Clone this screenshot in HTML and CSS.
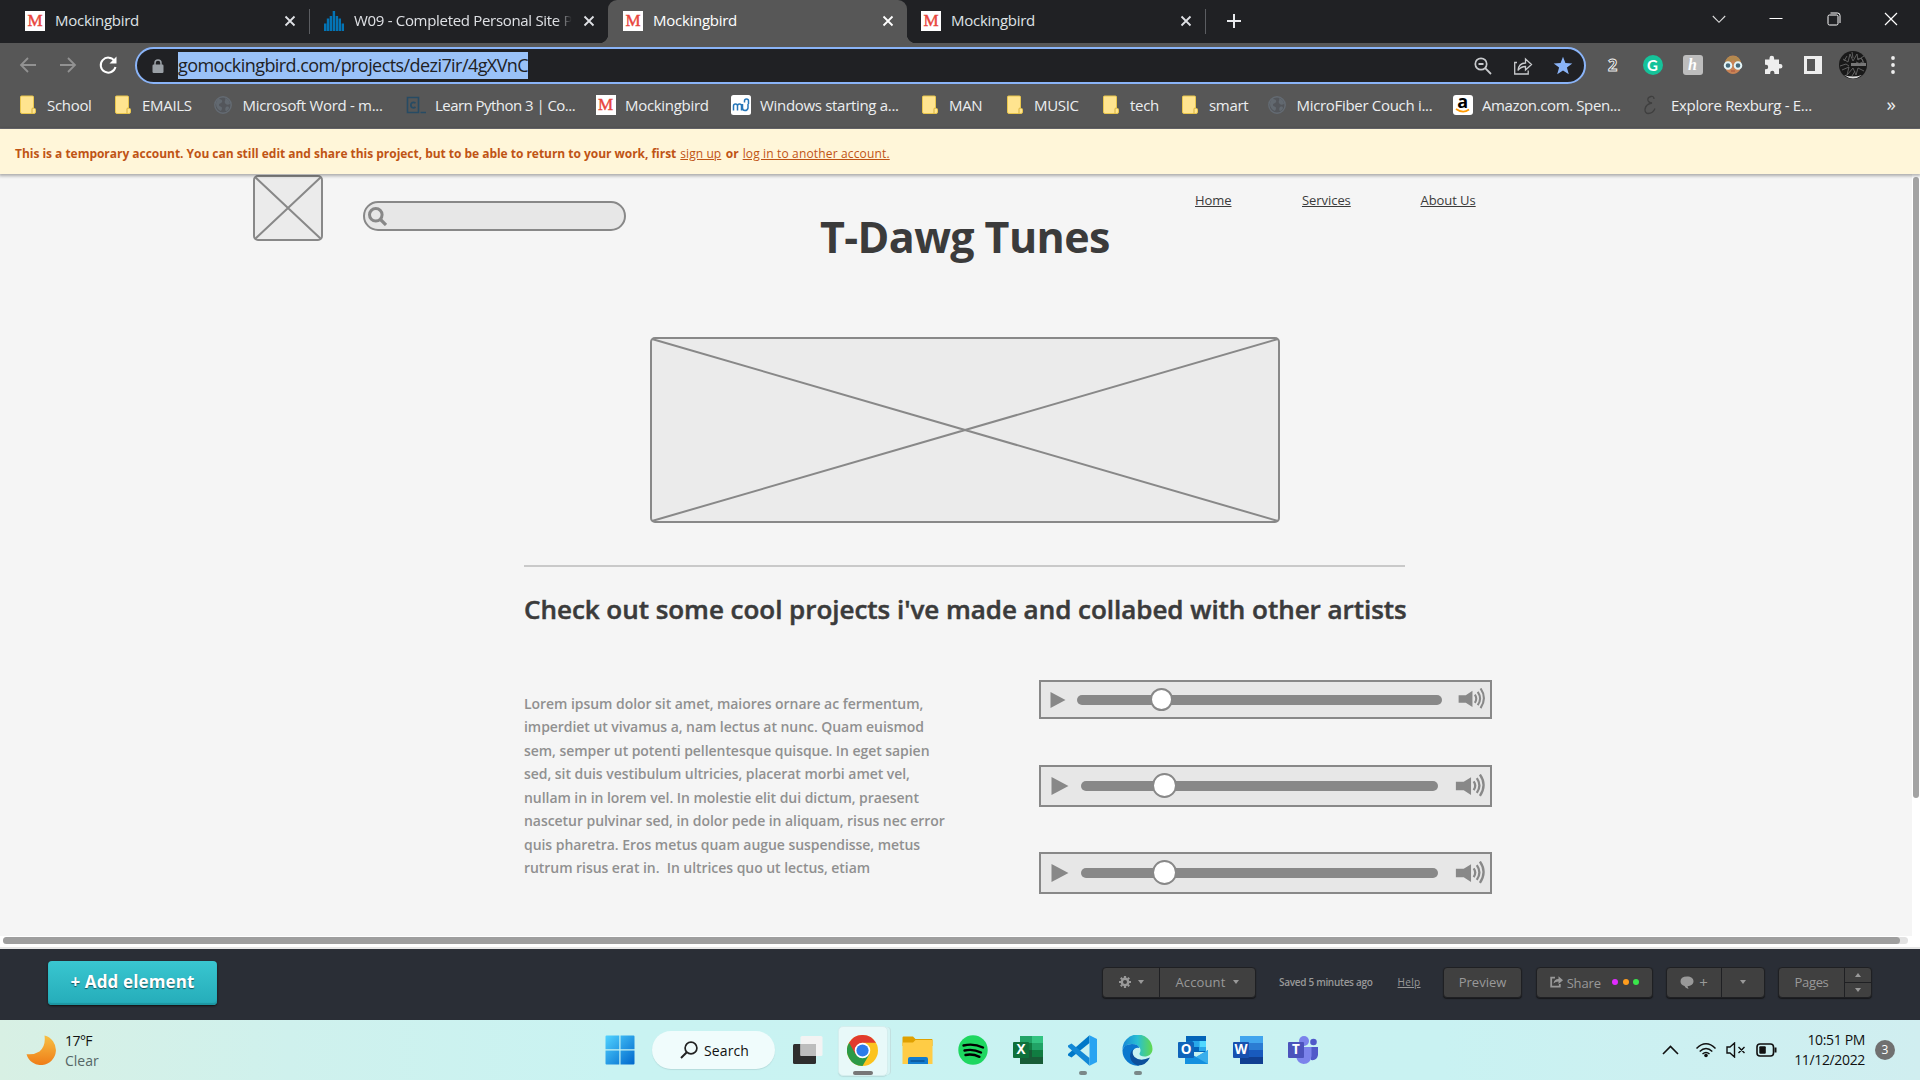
FILE: index.html
```html
<!DOCTYPE html>
<html lang="en">
<head>
<meta charset="utf-8">
<title>Mockingbird</title>
<link rel="stylesheet" href="styles.css">
</head>
<body>
<svg class="defs" width="0" height="0" aria-hidden="true">
  <symbol id="close" viewBox="0 0 12 12"><path d="M1.5 1.5l9 9M10.5 1.5l-9 9" stroke="currentColor" stroke-width="1.8" fill="none"/></symbol>
  <symbol id="folder" viewBox="0 0 16 20"><path d="M1.500 1h11a1 1 0 0 1 1 1v11.500h1a1 1 0 0 1 1 1V17a1.500 1.500 0 0 1-1.500 1.500H2a1.500 1.500 0 0 1-1.500-1.500V2a1 1 0 0 1 1-1z" fill="#ffe48f" stroke="#e9c64d"/><path d="M12 18.500V14a1 1 0 0 1 1-1" stroke="#d9b23c" fill="none"/></symbol>
  <symbol id="globe" viewBox="0 0 20 20"><circle cx="10" cy="10" r="8.200" fill="#53565b" stroke="#646b73" stroke-width="1.400"/><path d="M5 4c3 0 5 1 4 3s-3 1-3 3 3 1 3 3-1 2-1 3c-3-1-5-4-5-7 0-2 1-4 2-5zM12 3c3 1 5 3 5 6-2 1-4 1-5-1s1-2 0-5zM13 12c2-1 3 0 3 1s-2 3-3 3-1-3 0-4z" fill="#626970"/></symbol>
  <symbol id="placeholder" viewBox="0 0 70 66"><rect x="1" y="1" width="68" height="64" rx="4" fill="#ebebeb" stroke="#888" stroke-width="2"/><path d="M2 2l66 62M68 2L2 64" stroke="#888" stroke-width="2"/></symbol>
  <symbol id="volume" viewBox="0 0 27 22"><path d="M0 7.500h7.500L14.500 3v17l-7-4.500H0z" fill="#888"/><path d="M17 7q3 4 0 8.500M20 4q5 7 0 14M23 .500q7 10 0 20.500" stroke="#888" stroke-width="2.200" fill="none"/></symbol>
</svg>

<header class="tabstrip">
  <div class="tab tab-first"><span class="m-icon">M</span><span class="tab-title">Mockingbird</span><svg class="tab-close"><use href="#close"/></svg></div>
  <div class="tab tab-second"><svg class="favicon" viewBox="0 0 20 20"><path d="M1.200 20v-7.500M4 20V7.500M6.900 20V5M9.900 20V0M12.900 20V5M15.800 20V7.500M18.800 20v-7.500" stroke="#0374b5" stroke-width="2.400"/></svg><span class="tab-title fade">W09 - Completed Personal Site P</span><svg class="tab-close"><use href="#close"/></svg></div>
  <div class="tab tab-active"><span class="m-icon">M</span><span class="tab-title">Mockingbird</span><svg class="tab-close"><use href="#close"/></svg></div>
  <div class="tab tab-last"><span class="m-icon">M</span><span class="tab-title">Mockingbird</span><svg class="tab-close"><use href="#close"/></svg></div>
  <svg class="new-tab" viewBox="0 0 16 16"><path d="M8 1v14M1 8h14" stroke="#e8eaed" stroke-width="2"/></svg>
  <div class="window-controls">
    <svg viewBox="0 0 14 14"><path d="M.800 4L7 10.300 13.200 4" stroke="#ddd" fill="none" stroke-width="1.100"/></svg>
    <svg viewBox="0 0 14 14"><path d="M.500 6.500h13" stroke="#fff"/></svg>
    <svg viewBox="0 0 14 14"><rect x="1" y="3" width="10" height="10" rx="1.500" stroke="#fff" fill="none"/><path d="M3.500 1h7A2.500 2.500 0 0 1 13 3.500V11" stroke="#fff" fill="none"/></svg>
    <svg viewBox="0 0 14 14"><path d="M1 1l12 12M13 1L1 13" stroke="#fff" stroke-width="1.200"/></svg>
  </div>
</header>

<div class="toolbar">
  <span class="slot"><svg width="18" height="18" viewBox="0 0 18 18"><path d="M17 9H2M9 2L2 9l7 7" stroke="#929292" stroke-width="1.800" fill="none"/></svg></span>
  <span class="slot"><svg width="18" height="18" viewBox="0 0 18 18"><path d="M1 9h15M9 2l7 7-7 7" stroke="#929292" stroke-width="1.800" fill="none"/></svg></span>
  <span class="slot"><svg width="20" height="20" viewBox="0 0 20 20"><path d="M16.500 6A7.500 7.500 0 1 0 17.500 12" stroke="#fff" stroke-width="2" fill="none"/><path d="M18.500 1.500v7h-7z" fill="#fff"/></svg></span>
  <div class="omnibox">
    <svg class="lock" viewBox="0 0 12 14"><path d="M3 6V4a3 3 0 0 1 6 0v2" stroke="#9aa0a6" stroke-width="1.500" fill="none"/><rect x="0.500" y="5.500" width="11" height="8.500" rx="1.200" fill="#9aa0a6"/></svg>
    <span class="url">gomockingbird.com/projects/dezi7ir/4gXVnC</span>
    <span class="slot push"><svg width="18" height="18" viewBox="0 0 18 18"><circle cx="7" cy="7" r="5.700" stroke="#c8cacd" stroke-width="1.700" fill="none"/><path d="M4.500 7h5M11.200 11.200L17 17" stroke="#c8cacd" stroke-width="1.800"/></svg></span>
    <span class="slot"><svg width="20" height="20" viewBox="0 0 20 20"><path d="M4 6.500H1.700V18h13.500v-3.500M5 14.500c.500-5 3-7.500 7.500-7.500V3l6 5.500-6 5.500v-3.500c-3.500 0-5.500 1-7.500 4z" stroke="#c8cacd" stroke-width="1.300" fill="none"/></svg></span>
    <span class="slot"><svg width="20" height="20" viewBox="0 0 20 20"><path d="M10 .800l2.400 6.300 6.900.300-5.400 4.200 1.900 6.600-5.800-3.800-5.800 3.800 1.900-6.600L.700 7.400l6.900-.300z" fill="#8ab4f8"/></svg></span>
  </div>
  <div class="extensions">
    <span class="slot ext-two">2</span>
    <span class="slot"><span class="ext-g">G</span></span>
    <span class="slot"><span class="ext-h">h</span></span>
    <span class="slot"><svg width="20" height="20" viewBox="0 0 20 20"><path d="M2 9a8 8.500 0 0 1 16 0l-1 6q-3 4-7 4t-7-4z" fill="#c98355"/><path d="M2 8q1-7 8-7t8 7q-5 0-8-3-2 3-8 3z" fill="#b3894f"/><circle cx="5" cy="10.500" r="3.300" fill="#476b7c" stroke="#e4f5f8" stroke-width="2"/><circle cx="15" cy="10.500" r="3.300" fill="#476b7c" stroke="#e4f5f8" stroke-width="2"/><path d="M8 16h4" stroke="#a7503d"/></svg></span>
    <span class="slot"><svg width="20" height="20" viewBox="0 0 20 20"><path d="M2 4.500h4.500V3a2.300 2.300 0 0 1 4.600 0v1.500H16V9h1.200a2.300 2.300 0 0 1 0 4.600H16v5.400h-4.600v-1.200a2.100 2.100 0 0 0-4.200 0V19H2v-4.800h1a2.200 2.200 0 0 0 0-4.400H2z" fill="#eee"/></svg></span>
    <span class="slot"><svg width="18" height="18" viewBox="0 0 18 18"><path d="M0 0h18v18H0zM3 3v12h8V3z" fill="#eee" fill-rule="evenodd"/></svg></span>
    <span class="slot"><svg width="28" height="28" viewBox="0 0 28 28"><circle cx="14" cy="14" r="14" fill="#191919"/><path d="M5 24q9 7 18 0-9 3-18 0z" fill="#ddd"/><path d="M12 13.500h15" stroke="#777" stroke-width="3"/><path d="M1 15l6-2 3 2M4 8l5 3 2-8 3 7 4-7 1 6 6-4M3 19l7-3-2 8 6-7 3 7 2-7 6 3M18 8q6-2 6 3-4 3-7 0M8 5l-3 5M13 1l1 6M16 20l-3 5M22 7l3 5" stroke="#666" stroke-width=".9" fill="none"/></svg></span>
    <span class="slot"><svg width="4" height="18" viewBox="0 0 4 18"><circle cx="2" cy="2" r="1.900" fill="#eee"/><circle cx="2" cy="9" r="1.900" fill="#eee"/><circle cx="2" cy="16" r="1.900" fill="#eee"/></svg></span>
  </div>
</div>

<nav class="bookmarks">
  <span class="bm"><svg><use href="#folder"/></svg>School</span>
  <span class="bm"><svg><use href="#folder"/></svg>EMAILS</span>
  <span class="bm"><svg><use href="#globe"/></svg>Microsoft Word - m...</span>
  <span class="bm python"><svg viewBox="0 0 20 20"><path d="M1.500 2.500h11v15h-11zM14.500 17.500H20" stroke="#274b64" stroke-width="1.600" fill="none"/><path d="M9.500 8q-2.500-1.500-4.300.500-1 2.500.800 4 1.800.800 3.500-.500" stroke="#274b64" stroke-width="1.700" fill="none"/></svg>Learn Python 3 | Co...</span>
  <span class="bm"><span class="m-icon">M</span>Mockingbird</span>
  <span class="bm"><svg viewBox="0 0 20 20"><rect width="20" height="20" rx="2.500" fill="#fff"/><path d="M2.500 15.500V11q0-2 2-2t2 2v4.500M6.500 11q0-2 2-2t2 2v4.500M11.500 9v4q0 2.500 2.500 2.500t3-2.500V9M13.500 7.500V6q0-2 2-2t2 2v3" stroke="#2676b8" stroke-width="1.500" fill="none"/></svg>Windows starting a...</span>
  <span class="bm"><svg><use href="#folder"/></svg>MAN</span>
  <span class="bm"><svg><use href="#folder"/></svg>MUSIC</span>
  <span class="bm"><svg><use href="#folder"/></svg>tech</span>
  <span class="bm"><svg><use href="#folder"/></svg>smart</span>
  <span class="bm"><svg><use href="#globe"/></svg>MicroFiber Couch i...</span>
  <span class="bm amazon"><span class="a-icon">a<svg viewBox="0 0 16 5"><path d="M1 1q7 5 13 .500" stroke="#f90" stroke-width="1.700" fill="none"/></svg></span>Amazon.com. Spen...</span>
  <span class="bm"><svg viewBox="0 0 20 20"><path d="M12 4q0-3-3-2.500-4 1-3 4 1 2.500 4 2.500-6 1-7 6-.300 4 3 4.500 5 0 7-5" stroke="#3f3f3f" stroke-width="1.300" fill="none"/></svg>Explore Rexburg - E...</span>
  <span class="more">»</span>
</nav>

<div class="banner"><b>This is a temporary account. You can still edit and share this project, but to be able to return to your work, first</b><a class="signup">sign up</a><b>or</b><a class="login">log in to another account.</a></div>

<main class="workspace">
  <div class="canvas">
    <svg class="el logo"><use href="#placeholder"/></svg>
    <div class="el search"><svg width="19" height="19" viewBox="0 0 19 19"><circle cx="7.800" cy="7.800" r="6.300" stroke="#888" stroke-width="3" fill="none"/><path d="M12 12l6 6" stroke="#888" stroke-width="3.200"/></svg></div>
    <h1 class="el title">T-Dawg Tunes</h1>
    <a class="el link home">Home</a>
    <a class="el link services">Services</a>
    <a class="el link about">About Us</a>
    <svg class="el hero" viewBox="0 0 630 186"><rect x="1" y="1" width="628" height="184" rx="4" fill="#ebebeb" stroke="#888" stroke-width="2"/><path d="M2 2l626 182M628 2L2 184" stroke="#888" stroke-width="2"/></svg>
    <div class="el rule"></div>
    <h2 class="el heading">Check out some cool projects i've made and collabed with other artists</h2>
    <p class="el body-text">Lorem ipsum dolor sit amet, maiores ornare ac fermentum,<br>imperdiet ut vivamus a, nam lectus at nunc. Quam euismod<br>sem, semper ut potenti pellentesque quisque. In eget sapien<br>sed, sit duis vestibulum ultricies, placerat morbi amet vel,<br>nullam in in lorem vel. In molestie elit dui dictum, praesent<br>nascetur pulvinar sed, in dolor pede in aliquam, risus nec error<br>quis pharetra. Eros metus quam augue suspendisse, metus<br>rutrum risus erat in.&nbsp; In ultrices quo ut lectus, etiam</p>
    <div class="el player player-1"><svg class="play" viewBox="0 0 16 17"><path d="M0 0l16 8.500L0 17z" fill="#888"/></svg><div class="track"><span class="knob"></span></div><svg class="vol"><use href="#volume"/></svg></div>
    <div class="el player large player-2"><svg class="play" viewBox="0 0 16 17"><path d="M0 0l16 8.500L0 17z" fill="#888"/></svg><div class="track"><span class="knob"></span></div><svg class="vol"><use href="#volume"/></svg></div>
    <div class="el player large player-3"><svg class="play" viewBox="0 0 16 17"><path d="M0 0l16 8.500L0 17z" fill="#888"/></svg><div class="track"><span class="knob"></span></div><svg class="vol"><use href="#volume"/></svg></div>
  </div>
  <div class="vscroll"><div class="vthumb"></div></div>
  <div class="hscroll"><div class="htrack"><div class="hthumb"></div></div></div>
</main>

<footer class="editor-bar">
  <button class="add">+ Add element</button>
  <div class="group gear"><span class="cell"><svg width="12" height="12" viewBox="0 0 12 12"><circle cx="6" cy="6" r="3.200" fill="none" stroke="#999" stroke-width="2.400"/><path d="M6 0v2M6 10v2M0 6h2M10 6h2M1.800 1.800l1.400 1.400M8.800 8.800l1.400 1.400M10.200 1.800L8.800 3.200M3.200 8.800l-1.400 1.400" stroke="#999" stroke-width="2.200"/></svg><i class="down"></i></span><span class="cell account"><span class="label">Account</span><i class="down"></i></span></div>
  <span class="saved">Saved 5 minutes ago</span>
  <a class="help">Help</a>
  <div class="group preview"><span class="cell">Preview</span></div>
  <div class="group share"><span class="cell"><svg width="13" height="12" viewBox="0 0 13 12"><path d="M5 1.700H1.200v9h8.600V8" stroke="#999" stroke-width="1.800" fill="none"/><path d="M3.500 7.500Q4 3 8.500 3V.300L13 4.200 8.500 8V5.500q-3 0-5 2z" fill="#999"/></svg><span class="share-text">Share</span><i class="dot pink"></i><i class="dot orange"></i><i class="dot green"></i></span></div>
  <div class="group comment"><span class="cell"><svg width="14" height="13" viewBox="0 0 14 13"><path d="M7 .500c4 0 6.500 2 6.500 4.800S11 10 7.500 10.300L8.500 13Q5 12 4.500 10 .500 9 .500 5.300.500.500 7 .500z" fill="#999"/></svg><span class="plus">+</span></span><span class="cell menu"><i class="down"></i></span></div>
  <div class="group pages"><span class="cell">Pages</span><span class="steps"><span><i class="up"></i></span><span><i class="down"></i></span></span></div>
</footer>

<footer class="taskbar">
  <div class="weather">
    <svg width="30" height="30" viewBox="0 0 30 30"><defs><linearGradient id="moon" x2="0" y2="1"><stop stop-color="#f7c044"/><stop offset="1" stop-color="#ef7d18"/></linearGradient></defs><path d="M18.500.500A15 15 0 1 1 .500 19.200Q8 20 13.500 16.500 20 11 18.500.500z" fill="url(#moon)"/></svg>
    <div class="weather-text"><div class="temp">17°F</div><div class="cond">Clear</div></div>
  </div>
  <div class="apps">
    <span class="app"><svg width="30" height="30" viewBox="0 0 30 30"><defs><linearGradient id="win" x2="1" y2="1"><stop stop-color="#50d2ff"/><stop offset="1" stop-color="#0067cc"/></linearGradient></defs><path d="M1.500.500h12.800v13.800H.500V1.500a1 1 0 0 1 1-1zM15.500.500h13a1 1 0 0 1 1 1v12.800h-14zM.500 15.500h13.800v14H1.500a1 1 0 0 1-1-1zM15.500 15.500h14v13a1 1 0 0 1-1 1h-13z" fill="url(#win)"/></svg></span>
    <span class="pill"><svg width="18" height="18" viewBox="0 0 18 18"><circle cx="11" cy="7" r="5.900" stroke="#222" stroke-width="1.700" fill="none"/><path d="M6.800 11.300L1 17" stroke="#222" stroke-width="2"/></svg>Search</span>
    <span class="app taskview"><svg width="32" height="30" viewBox="0 0 32 30"><rect x="1" y="9" width="23" height="20" rx="1.500" fill="#2e2e2e"/><rect x="8.500" y="1" width="22" height="20" rx="1.500" fill="#f3f3f3"/><path d="M8.500 9H24v12H8.500z" fill="#bdbdbd"/></svg></span>
    <span class="app current"><svg width="31" height="31" viewBox="0 0 32 32"><circle cx="16" cy="16" r="16" fill="#fcc31e"/><path d="M16 16L2.140 8A16 16 0 0 0 16 32l7-12z" fill="#2b9a47"/><path d="M16 16V8h13.860A16 16 0 0 0 2.140 8l6.930 12z" fill="#e13b2e"/><circle cx="16" cy="16" r="8" fill="#fff"/><circle cx="16" cy="16" r="6.300" fill="#2d7bea"/></svg><i class="running wide"></i></span>
    <span class="app"><svg width="31" height="29" viewBox="0 0 31 29"><path d="M.500 1.500a1 1 0 0 1 1-1H11l2.500 2.500H30a1 1 0 0 1 .500 1V10H.500z" fill="#e0a100"/><path d="M.500 6.500H11l2.500-2.500H30.500v24H.500z" fill="#ffcc45"/><path d="M6 28v-5q0-2 2-2h16q2 0 2 2v5z" fill="#137cce"/><path d="M8.500 25h14" stroke="#084d8d" stroke-width="1.300"/></svg></span>
    <span class="app"><svg width="30" height="30" viewBox="0 0 30 30"><circle cx="15" cy="15" r="14.700" fill="#1ed760"/><path d="M5.500 10.500q10-2.500 19.500 2M6.500 15.500q8.500-2 16.500 2M7.500 20q7-1.500 14 1.800" stroke="#000" stroke-width="2.400" stroke-linecap="round" fill="none"/></svg></span>
    <span class="app"><svg width="30" height="30" viewBox="0 0 30 30"><path d="M7 1h23v28H7z" fill="#185c37"/><path d="M7 1h12v9H7z" fill="#21a366"/><path d="M19 1h11v8H19z" fill="#33c481"/><path d="M19 8h11v7H19z" fill="#21a366"/><path d="M7 8h12v7H7z" fill="#107c41"/><path d="M19 15h11v7H19z" fill="#107c41"/><rect y="7" width="16" height="16" rx="1" fill="#0e703b"/><text x="8" y="19.300" class="glyph">X</text></svg></span>
    <span class="app"><svg width="31" height="31" viewBox="0 0 31 31"><path d="M22.500 8L4.500 22.500 1 20.500V19L22.500.300z" fill="#0078c8"/><path d="M22.500 23L4.500 8.500 1 10.500V12l21.500 18.700z" fill="#1288d6"/><path d="M22.500.300L30 4v23l-7.500 3.700z" fill="#29a3f2"/></svg><i class="running"></i></span>
    <span class="app"><svg width="31" height="31" viewBox="0 0 31 31"><defs><linearGradient id="edge" x2="1"><stop stop-color="#1688d8"/><stop offset=".5" stop-color="#29bfd3"/><stop offset="1" stop-color="#62d94c"/></linearGradient></defs><path d="M.500 15A15 15 0 0 1 30.500 14c0 5-4 7.500-8 7.500-3 0-5-1-5-2.500s1-1.500 1-4c0-3-4-6-8.500-6S1 12 .500 15z" fill="url(#edge)"/><path d="M.500 15Q2 9 10 9q6 0 7.500 4-5-1-7 3.500-2 9 7 14A15 15 0 0 1 .500 15z" fill="#0b78ce"/><path d="M12 13.500q-3 4 .500 8.500Q18 27 28 22.500q-4 8-12 8-7-2-8-9 0-5 4-8z" fill="#0c509c"/></svg><i class="running"></i></span>
    <span class="app"><svg width="30" height="30" viewBox="0 0 30 30"><path d="M8 1h20v16H8z" fill="#0364b8"/><path d="M8 6h6.700v7H8z" fill="#0a6fc2"/><path d="M14.700 6h6.600v6h-6.600z" fill="#28a8ea"/><path d="M21.300 6H28v6h-6.700z" fill="#50d9ff"/><path d="M14 12h7v5h-7z" fill="#0364b8"/><path d="M21 12h7v4h-7z" fill="#28a8ea"/><path d="M7 16l11.500 6L30 15v14H7z" fill="#1490df"/><path d="M18 22l12 7V15z" fill="#38aeec"/><rect y="7" width="16" height="16" rx="1" fill="#0f64ba"/><text x="8" y="19.300" class="glyph">O</text></svg></span>
    <span class="app"><svg width="30" height="30" viewBox="0 0 30 30"><path d="M7 1h23v7.500H7z" fill="#41a5ee"/><path d="M7 8h23v7H7z" fill="#2b7cd3"/><path d="M7 15h23v7H7z" fill="#185abd"/><path d="M7 22h23v7H7z" fill="#103f91"/><rect y="7" width="16" height="16" rx="1" fill="#1751b0"/><text x="8" y="19.300" class="glyph">W</text></svg></span>
    <span class="app"><svg width="30" height="30" viewBox="0 0 30 30"><circle cx="16" cy="6" r="5" fill="#7b83eb"/><circle cx="25.500" cy="7" r="3.300" fill="#5059c9"/><path d="M19 12h11v8q-1 6-7 5z" fill="#5059c9"/><path d="M9 12h14.500v9q-1 8-8 8-6-1-7-6z" fill="#7b83eb"/><rect y="7" width="16" height="16" rx="1" fill="#4b53bc"/><text x="8" y="19.300" class="glyph">T</text></svg></span>
  </div>
  <div class="tray">
    <svg width="17" height="10" viewBox="0 0 17 10"><path d="M1 9l7.500-7.500L16 9" stroke="#111" stroke-width="1.600" fill="none"/></svg>
    <svg width="22" height="16" viewBox="0 0 22 16"><path d="M1.500 6.500q9.500-9.500 19 0M4.700 9.500q6.300-6 12.600 0M7.500 12q3.500-3 7 0" stroke="#111" stroke-width="1.500" fill="none"/><circle cx="11" cy="13.500" r="1.800" fill="#111"/></svg>
    <svg width="20" height="16" viewBox="0 0 20 16"><path d="M1 5v6h3l4.500 4V1L4 5zM12.500 5l6 6M18.500 5l-6 6" stroke="#111" stroke-width="1.400" fill="none"/></svg>
    <svg width="21" height="14" viewBox="0 0 21 14"><rect x="1" y="1" width="16.500" height="12" rx="3" stroke="#111" stroke-width="1.600" fill="none"/><rect x="3.300" y="3.300" width="6.500" height="7.400" rx="1" fill="#111"/><path d="M19.500 4.500v5" stroke="#111" stroke-width="2"/></svg>
    <div class="clock"><div class="time">10:51 PM</div><div class="date">11/12/2022</div></div>
    <span class="badge">3</span>
  </div>
</footer>
</body>
</html>
```
FILE: styles.css
```css
* { box-sizing: border-box; }
body { margin: 0; width: 1920px; height: 1080px; overflow: hidden; display: flex; flex-direction: column; font-family: "Open Sans", "Noto Sans", sans-serif; background: #f5f5f5; }
svg { display: block; flex: none; }
.defs { display: none; }

/* browser tabs */
.tabstrip { height: 43px; flex: none; display: flex; background: #202124; color: #dfe1e5; }
.tab { display: flex; align-items: center; height: 43px; padding-bottom: 2px; font-size: 15px; letter-spacing: -0.27px; white-space: nowrap; }
.tab-title { margin-left: 10px; width: 229px; overflow: hidden; line-height: 26px; padding-bottom: 2px; }
.tab-close { width: 12px; height: 12px; margin-top: 1px; }
.tab-first { width: 311px; padding-left: 25px; position: relative; }
.tab-first::after, .tab-last::after { content: ""; position: absolute; right: 1px; top: 9px; width: 1px; height: 25px; background: #5b5d61; }
.tab-second { width: 297px; padding-left: 13px; }
.tab-second .tab-title { width: 220px; margin-right: 9px; }
.fade { -webkit-mask-image: linear-gradient(90deg, #000 92%, transparent 99%); mask-image: linear-gradient(90deg, #000 92%, transparent 99%); }
.tab-second .fade { letter-spacing: -0.31px; }
.tab-active { width: 299px; padding-left: 15px; background: #575757; border-radius: 9px 9px 0 0; position: relative; color: #fff; }
.tab-active::before, .tab-active::after { content: ""; position: absolute; bottom: 0; width: 9px; height: 9px; }
.tab-active::before { left: -9px; background: radial-gradient(circle at 0 0, transparent 9px, #575757 9.5px); }
.tab-active::after { right: -9px; background: radial-gradient(circle at 100% 0, transparent 9px, #575757 9.5px); }
.tab-last { width: 300px; padding-left: 14px; position: relative; }
.m-icon { width: 20px; height: 20px; flex: none; background: #fff; color: #e8443c; font: 17px/20px "Liberation Serif", serif; -webkit-text-stroke: .4px #e8443c; text-align: center; letter-spacing: 0; }
.favicon { width: 20px; height: 20px; }
.new-tab { width: 16px; height: 16px; margin: 13px 0 0 19px; }
.window-controls { margin-left: auto; display: flex; gap: 43.3px; padding: 12px 22px 0 0; }
.window-controls svg { width: 14px; height: 14px; }

/* address bar */
.toolbar { height: 43px; flex: none; display: flex; align-items: center; padding-left: 7.500px; background: #575757; }
.slot { width: 40px; display: flex; align-items: center; justify-content: center; flex: none; }
.omnibox { width: 1451.500px; height: 37.500px; margin: 2px 0 0 7px; border: 2.500px solid #8ab4f8; border-radius: 19px; background: #202124; display: flex; align-items: center; padding: 0 1px 0 15px; }
.lock { width: 12px; height: 14px; margin-right: 14.500px; }
.url { width: 350px; height: 27px; background: #9ac2f8; color: #202124; font-size: 18px; line-height: 27px; letter-spacing: -0.57px; white-space: nowrap; }
.push { margin-left: auto; }
.extensions { display: flex; align-items: center; height: 43px; padding-left: 6.500px; }
.ext-two { font: bold 16px "Noto Sans", sans-serif; color: #3d3d3d; -webkit-text-stroke: 1px #eee; }
.ext-g { width: 20px; height: 20px; border-radius: 50%; background: #15c39a; color: #fff; font: bold 15px/20px Lato, sans-serif; text-align: center; }
.ext-h { width: 20px; height: 20px; border-radius: 3px; background: #bdbdbd; color: #fff; font: italic bold 16px/19px "Liberation Serif", serif; text-align: center; }

/* bookmarks */
.bookmarks { height: 43px; flex: none; display: grid; grid-template-columns: 95px 100.500px 192.500px 190px 135px 189px 85px 96px 79px 87.500px 185.500px 189px 239px 30px; padding: 0 0 4px 17.500px; align-items: center; background: #575757; border-bottom: 1px solid #6f6f75; color: #eceef0; font-size: 15px; letter-spacing: -0.31px; white-space: nowrap; }
.bm { display: flex; align-items: center; gap: 9.500px; line-height: 20px; }
.bm > svg { width: 20px; height: 20px; }
.python { letter-spacing: -0.54px; }
.amazon { letter-spacing: -0.38px; }
.a-icon { width: 20px; height: 20px; border-radius: 3px; background: #fff; color: #000; font: bold 18px/12px "Open Sans", sans-serif; text-align: center; }
.a-icon svg { width: 16px; height: 5px; margin: 1px auto 0; }
.more { font-size: 19px; line-height: 20px; padding: 0 0 3px 6px; }

/* account notice */
.banner { position: relative; z-index: 2; height: 45px; flex: none; display: flex; align-items: center; padding: 3px 0 0 15px; background: #fff6d9; box-shadow: 0 1px 3px 1px rgba(0, 0, 0, .3); color: #bf5415; font-size: 12px; white-space: nowrap; }
.banner b { letter-spacing: -0.03px; }
.banner a { text-decoration: underline; margin: 0 4.500px 0 4px; }
.signup { letter-spacing: .08px; }
.login { letter-spacing: .15px; }

/* mockup workspace */
.workspace { height: 775px; flex: none; display: grid; grid-template: 762px 13px / 1912px 8px; background: #fff; border-bottom: 2px solid #b8b8b8; }
.canvas { position: relative; background: #f5f5f5; overflow: hidden; }
.el { position: absolute; margin: 0; white-space: nowrap; color: #3b3b3b; }
.logo { left: 253px; top: 1px; width: 70px; height: 66px; }
.search { left: 363px; top: 27px; width: 263px; height: 30px; border: 2px solid #888; border-radius: 15px; background: #e7e7e7; padding: 4px 3px; }
.title { left: 820px; top: 38px; font-size: 43px; font-weight: 700; line-height: 50px; letter-spacing: -0.6px; }
.link { top: 16px; font-size: 13px; line-height: 20px; letter-spacing: -0.06px; text-decoration: underline; }
.home { left: 1195px; }
.services { left: 1302px; }
.about { left: 1420.500px; }
.hero { left: 650px; top: 163px; width: 630px; height: 186px; }
.rule { left: 524px; top: 391px; width: 881px; height: 2px; background: #c9c9c9; }
.heading { left: 524px; top: 417px; font-size: 26px; font-weight: 600; line-height: 36px; letter-spacing: -0.03px; -webkit-text-stroke: .5px #3b3b3b; }
.body-text { left: 524px; top: 518px; font-size: 14px; font-weight: 600; line-height: 23.430px; letter-spacing: -0.05px; color: #909090; }
.player { left: 1039px; width: 453px; height: 39px; border: 2px solid #888; background: #e7e7e7; display: flex; align-items: center; padding: 0 5px 0 9px; }
.player-1 { top: 506px; }
.player-2 { top: 591px; }
.player-3 { top: 678px; }
.play { width: 16px; height: 16px; margin-right: 11px; }
.track { position: relative; flex: 1; height: 10px; border-radius: 5px; background: #888; }
.knob { position: absolute; left: 73px; top: -7px; width: 23px; height: 23px; border: 2px solid #888; border-radius: 50%; background: #fff; }
.vol { width: 27px; height: 21px; margin: -2px 0 0 16px; }
.large { height: 42px; padding-left: 10px; }
.large .play { width: 18px; height: 18px; margin-right: 12px; }
.large .knob { left: 71px; top: -8px; width: 25px; height: 25px; }
.large .vol { width: 30px; height: 23px; margin-left: 17px; }
.vscroll { background: #fff; }
.vthumb { width: 6px; height: 621px; margin: 3px 0 0 1px; border-radius: 3px; background: #a3a3a3; }
.hscroll { grid-column: 1 / 3; padding: 1px 3px; border-bottom: 2px solid #e6e6e6; }
.htrack { width: 1905px; height: 7px; border-radius: 4px; background: #e2e2e2; }
.hthumb { width: 1897px; height: 7px; border-radius: 4px; background: #9e9e9e; }

/* editor controls */
.editor-bar { height: 71px; flex: none; display: flex; align-items: flex-start; padding: 18px 48px 0; background: #2a2e36; color: #999; font-size: 13px; white-space: nowrap; }
.add { width: 169px; height: 44px; margin: -6px 885px 0 0; padding: 0 0 4px; border: 0; border-radius: 4px; background: linear-gradient(#39c6d0, #25acb9); box-shadow: inset 0 -2px 1px #1d96a2, 0 1px 2px #111; color: #fff; font: 700 17px "Open Sans", sans-serif; letter-spacing: .13px; text-shadow: 0 1px 1px #17545b; flex: none; }
.group { display: flex; height: 31px; border: 1px solid #1f2023; border-radius: 4px; background: #404040; flex: none; overflow: hidden; box-shadow: 0 1px 1px #17181b; }
.cell { display: flex; align-items: center; justify-content: center; flex: 1; padding-bottom: 1px; }
.down { border: 3px solid transparent; border-top: 4px solid #999; border-bottom: 0; }
.up { border: 3px solid transparent; border-bottom: 4px solid #999; border-top: 0; }
.gear { width: 154px; }
.gear .cell:first-child { flex: 0 0 56px; gap: 7px; }
.account { border-left: 1px solid #1f2023; gap: 8px; letter-spacing: .13px; }
.saved { margin: 0 0 0 23px; width: 120px; font-size: 10px; font-weight: 600; line-height: 31px; letter-spacing: -0.3px; }
.help { width: 46px; font-size: 10px; line-height: 31px; letter-spacing: .34px; text-decoration: underline; }
.preview { width: 79px; margin-right: 14px; }
.share { width: 117px; margin-right: 13px; }
.share-text { margin: 2px 7px 0 4px; letter-spacing: -0.15px; }
.dot { width: 6px; height: 6px; margin-left: 4.500px; border-radius: 50%; }
.pink { background: #e02bff; }
.orange { background: #ff9d1e; }
.green { background: #39e64b; }
.comment { width: 99px; margin-right: 13px; }
.plus { margin-left: 5px; font-size: 15px; }
.menu { flex: 0 0 43px; border-left: 1px solid #1f2023; }
.pages { width: 94px; letter-spacing: -0.32px; }
.steps { width: 27px; border-left: 1px solid #1f2023; display: flex; flex-direction: column; }
.steps span { flex: 1; display: flex; align-items: center; justify-content: center; }
.steps span + span { border-top: 1px solid #1f2023; }

/* system taskbar */
.taskbar { height: 60px; flex: none; display: flex; align-items: center; background: linear-gradient(90deg, #d8f0e4, #cff1ed 15%, #c9f3f2 32%, #c9f2f2 75%, #d0eef0 100%); color: #111; font-size: 14px; }
.weather { display: flex; align-items: center; width: 592px; padding-left: 26px; }
.weather-text { margin: 1px 0 0 9px; line-height: 20px; }
.temp { letter-spacing: -0.56px; }
.cond { color: #566; }
.apps { display: flex; align-items: center; height: 60px; }
.app { position: relative; width: 55px; height: 48px; display: flex; align-items: center; justify-content: center; flex: none; }
.taskview { padding-left: 1px; }
.pill { width: 123px; height: 38px; margin: 0 5px; border-radius: 19px; background: #f0fcfc; box-shadow: 0 1px 1px #b5dcdc; display: flex; align-items: center; padding-left: 28px; gap: 6px; letter-spacing: .11px; }
.current::before { content: ""; position: absolute; left: 3px; top: 0; width: 48px; height: 48px; border-radius: 5px; border: 1px solid #d5eeee; background: #e8f9f9; box-shadow: 3px 0 0 -1px #d6f4f4, 4px 0 0 -1px #c3e0e0, 0 1px 1px #b8dcdc; }
.current svg { position: relative; }
.running { position: absolute; left: 24px; bottom: -1px; width: 8px; height: 4px; border-radius: 2px; background: #7a8888; }
.wide { left: 18px; width: 20px; background: #777; }
.glyph { font: 700 13.500px "Open Sans", sans-serif; fill: #fff; text-anchor: middle; }
.tray { margin-left: auto; display: flex; align-items: center; padding-right: 25px; }
.tray svg:nth-of-type(1) { margin-right: 16px; }
.tray svg:nth-of-type(2) { margin-right: 9px; }
.tray svg:nth-of-type(3) { margin-right: 10px; }
.clock { width: 88px; margin-right: 1px; text-align: right; line-height: 20px; letter-spacing: -0.35px; }
.badge { width: 20px; height: 20px; margin-left: 9px; border-radius: 50%; background: #707070; color: #fff; font-size: 12px; line-height: 19px; text-align: center; }
```
